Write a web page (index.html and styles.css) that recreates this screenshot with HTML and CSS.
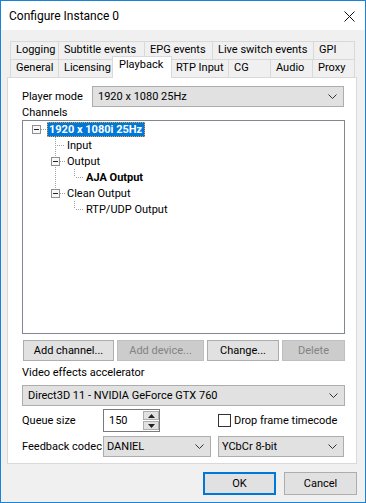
FILE: index.html
```html
<!DOCTYPE html>
<html lang="en">
<head>
    <meta charset="UTF-8">
    <title>Configure Instance 0</title>
    <link rel="stylesheet" href="styles.css">
</head>
<body>
    <div class="window">
        <div class="titlebar">
            <span class="title">Configure Instance 0</span>
            <svg class="close" width="11" height="11" viewBox="0 0 11 11"><path d="M0.5 0.5 L10.5 10.5 M10.5 0.5 L0.5 10.5" stroke="#111" stroke-width="1" fill="none"/></svg>
        </div>

        <div class="content">
            <div class="tabs">
                <div class="tab-row">
                    <div class="tab" style="width:49px">Logging</div>
                    <div class="tab" style="width:87px">Subtitle events</div>
                    <div class="tab" style="width:69px">EPG events</div>
                    <div class="tab" style="width:102px">Live switch events</div>
                    <div class="tab" style="width:42px">GPI</div>
                </div>
                <div class="tab-row">
                    <div class="tab" style="width:49px">General</div>
                    <div class="tab" style="width:56px">Licensing</div>
                    <div class="tab active" style="width:60px">Playback</div>
                    <div class="tab" style="width:59px">RTP Input</div>
                    <div class="tab" style="width:43px">CG</div>
                    <div class="tab" style="width:43px">Audio</div>
                    <div class="tab" style="width:43px">Proxy</div>
                </div>
            </div>

            <div class="panel">
                <div class="field-row">
                    <span class="label player-label">Player mode</span>
                    <div class="combo player-combo">
                        <span>1920 x 1080 25Hz</span>
                        <svg class="chev" width="9" height="5" viewBox="0 0 9 5"><path d="M0.5 0.5 L4.5 4.5 L8.5 0.5" stroke="#333" fill="none"/></svg>
                    </div>
                </div>

                <div class="caption channels">Channels</div>

                <div class="tree">
                    <div class="tree-row">
                        <svg class="cell" width="19" height="16"><rect x="5.5" y="4.5" width="8" height="8" fill="#f7f7f7" stroke="#8f8f8f"/><path d="M7 8.5 H12" stroke="#222"/><path d="M14 8.5 H19" stroke="#a0a0a0" stroke-dasharray="1 1"/></svg>
                        <span class="node selected">1920 x 1080i 25Hz</span>
                    </div>
                    <div class="tree-row">
                        <span class="indent"></span>
                        <svg class="cell" width="19" height="16"><path d="M9.5 0 V16" stroke="#a0a0a0" stroke-dasharray="1 1"/><path d="M11 8.5 H19" stroke="#a0a0a0" stroke-dasharray="1 1"/></svg>
                        <span class="node">Input</span>
                    </div>
                    <div class="tree-row">
                        <span class="indent"></span>
                        <svg class="cell" width="19" height="16"><path d="M9.5 0 V16" stroke="#a0a0a0" stroke-dasharray="1 1"/><rect x="5.5" y="4.5" width="8" height="8" fill="#f7f7f7" stroke="#8f8f8f"/><path d="M7 8.5 H12" stroke="#222"/><path d="M14 8.5 H19" stroke="#a0a0a0" stroke-dasharray="1 1"/></svg>
                        <span class="node">Output</span>
                    </div>
                    <div class="tree-row">
                        <span class="indent"></span>
                        <svg class="cell" width="19" height="16"><path d="M9.5 0 V16" stroke="#a0a0a0" stroke-dasharray="1 1"/></svg>
                        <svg class="cell" width="19" height="16"><path d="M9.5 0 V8" stroke="#a0a0a0" stroke-dasharray="1 1"/><path d="M11 8.5 H19" stroke="#a0a0a0" stroke-dasharray="1 1"/></svg>
                        <span class="node bold">AJA Output</span>
                    </div>
                    <div class="tree-row">
                        <span class="indent"></span>
                        <svg class="cell" width="19" height="16"><path d="M9.5 0 V8" stroke="#a0a0a0" stroke-dasharray="1 1"/><rect x="5.5" y="4.5" width="8" height="8" fill="#f7f7f7" stroke="#8f8f8f"/><path d="M7 8.5 H12" stroke="#222"/><path d="M14 8.5 H19" stroke="#a0a0a0" stroke-dasharray="1 1"/></svg>
                        <span class="node">Clean Output</span>
                    </div>
                    <div class="tree-row">
                        <span class="indent"></span>
                        <span class="indent"></span>
                        <svg class="cell" width="19" height="16"><path d="M9.5 0 V8" stroke="#a0a0a0" stroke-dasharray="1 1"/><path d="M11 8.5 H19" stroke="#a0a0a0" stroke-dasharray="1 1"/></svg>
                        <span class="node">RTP/UDP Output</span>
                    </div>
                </div>

                <div class="button-row">
                    <div class="btn" style="width:91px">Add channel...</div>
                    <div class="btn disabled" style="width:87px">Add device...</div>
                    <div class="btn" style="width:72px">Change...</div>
                    <div class="btn disabled" style="width:63px">Delete</div>
                </div>

                <div class="caption accel">Video effects accelerator</div>
                <div class="combo wide-combo">
                    <span>Direct3D 11 - NVIDIA GeForce GTX 760</span>
                    <svg class="chev" width="9" height="5" viewBox="0 0 9 5"><path d="M0.5 0.5 L4.5 4.5 L8.5 0.5" stroke="#333" fill="none"/></svg>
                </div>

                <div class="field-row queue-row">
                    <span class="label short-label">Queue size</span>
                    <div class="spinner">
                        <div class="spin-text">150</div>
                        <div class="spin-buttons">
                            <div class="spin-btn"><svg width="7" height="4" viewBox="0 0 7 4"><path d="M3.5 0 L7 4 L0 4 Z" fill="#222"/></svg></div>
                            <div class="spin-btn"><svg width="7" height="4" viewBox="0 0 7 4"><path d="M0 0 L7 0 L3.5 4 Z" fill="#222"/></svg></div>
                        </div>
                    </div>
                    <div class="checkbox"></div>
                    <span class="check-label">Drop frame timecode</span>
                </div>

                <div class="field-row codec-row">
                    <span class="label short-label">Feedback codec</span>
                    <div class="combo codec-combo">
                        <span>DANIEL</span>
                        <svg class="chev" width="9" height="5" viewBox="0 0 9 5"><path d="M0.5 0.5 L4.5 4.5 L8.5 0.5" stroke="#333" fill="none"/></svg>
                    </div>
                    <div class="combo format-combo">
                        <span>YCbCr 8-bit</span>
                        <svg class="chev" width="9" height="5" viewBox="0 0 9 5"><path d="M0.5 0.5 L4.5 4.5 L8.5 0.5" stroke="#333" fill="none"/></svg>
                    </div>
                </div>
            </div>

            <div class="footer">
                <div class="btn dialog-btn default">OK</div>
                <div class="btn dialog-btn">Cancel</div>
            </div>
        </div>
    </div>
</body>
</html>
```

FILE: styles.css
```css
* {
    margin: 0;
    padding: 0;
    box-sizing: border-box;
}

body {
    font-family: Roboto, 'Noto Sans', sans-serif;
    font-size: 11px;
    color: #000;
    background: #fff;
}

.window {
    width: 366px;
    height: 503px;
    border: 1px solid #1883d7;
    background: #f0f0f0;
    display: flex;
    flex-direction: column;
}

.titlebar {
    height: 29px;
    background: #fff;
    display: flex;
    align-items: center;
    justify-content: space-between;
    padding: 0 10px 0 8px;
    font-size: 12px;
}

.title {
    line-height: 16px;
    padding-top: 1px;
}

.close {
    display: block;
    margin-top: 1px;
}

.content {
    padding: 11px 8px 0 6px;
}

/* tab strip */
.tabs {
    padding-left: 3px;
}

.tab-row {
    display: flex;
    height: 18px;
}

.tab {
    height: 18px;
    margin-left: -1px;
    border: 1px solid #d9d9d9;
    border-bottom: none;
    background: #f0f0f0;
    padding-left: 5px;
    line-height: 16px;
    white-space: nowrap;
    overflow: hidden;
}

.tab:first-child {
    margin-left: 0;
}

.tab.active {
    position: relative;
    z-index: 1;
    height: 22px;
    margin-top: -3px;
    margin-left: -2px;
    margin-right: -1px;
    width: 59px;
    background: #fff;
    padding-left: 6px;
}

.panel {
    width: 350px;
    height: 387px;
    border: 1px solid #d9d9d9;
    background: #fff;
    padding: 8px 0 0 14px;
}

.field-row {
    display: flex;
    align-items: center;
}

.label {
    line-height: 14px;
    white-space: nowrap;
}

.player-label {
    width: 70px;
}

.short-label {
    width: 81px;
}

.caption {
    line-height: 14px;
    white-space: nowrap;
}

.channels {
    height: 14px;
    margin-top: -1px;
}

.accel {
    height: 14px;
    margin: 5px 0 5px;
}

/* combo boxes */
.combo {
    height: 21px;
    background: #e1e1e1;
    border: 1px solid #adadad;
    display: flex;
    align-items: center;
    justify-content: space-between;
    padding: 0 6px 0 5px;
    white-space: nowrap;
}

.chev {
    display: block;
}

.player-combo {
    width: 252px;
}

.wide-combo {
    width: 323px;
}

.codec-combo {
    width: 108px;
    padding-left: 3px;
}

.format-combo {
    width: 126px;
    margin-left: 7px;
    padding-left: 3px;
}

/* tree view */
.tree {
    width: 323px;
    height: 214px;
    border: 1px solid #828790;
    padding: 0 0 0 4px;
}

.tree-row {
    display: flex;
    align-items: center;
    height: 16px;
}

.cell {
    display: block;
    flex: none;
}

.indent {
    width: 19px;
    flex: none;
}

.node {
    padding: 0 1px;
    line-height: 13px;
    height: 15px;
    border: 1px solid transparent;
    white-space: nowrap;
}

.node.selected {
    margin-left: 1px;
    padding: 0 2px 0 1px;
    background: #0078d7;
    color: #fff;
    font-weight: bold;
    border: 1px dotted #f0a030;
}

.node.bold {
    font-weight: bold;
}

/* buttons */
.button-row {
    display: flex;
    gap: 3px;
    margin: 6px 0 0 1px;
}

.btn {
    height: 21px;
    background: #e1e1e1;
    border: 1px solid #adadad;
    display: flex;
    align-items: center;
    justify-content: center;
    white-space: nowrap;
}

.btn.disabled {
    background: #cccccc;
    border-color: #bfbfbf;
    color: #838383;
}

/* spinner and checkbox */
.queue-row {
    margin-top: 3px;
    height: 23px;
}

.spinner {
    display: flex;
    width: 57px;
    height: 23px;
    border: 1px solid #7a7a7a;
}

.spin-text {
    width: 39px;
    padding-left: 5px;
    line-height: 21px;
}

.spin-buttons {
    display: flex;
    flex-direction: column;
    gap: 1px;
    width: 16px;
    padding: 1px 0;
}

.spin-btn {
    flex: 1;
    background: #e1e1e1;
    border: 1px solid #adadad;
    display: flex;
    align-items: center;
    justify-content: center;
}

.spin-btn svg {
    display: block;
}

.checkbox {
    width: 13px;
    height: 13px;
    border: 1px solid #333;
    background: #fff;
    margin-left: 58px;
}

.check-label {
    margin-left: 3px;
    white-space: nowrap;
}

.codec-row {
    margin-top: 4px;
}

/* dialog buttons */
.footer {
    display: flex;
    justify-content: flex-end;
    gap: 8px;
    margin-top: 8px;
}

.dialog-btn {
    width: 73px;
    height: 23px;
}

.dialog-btn.default {
    border: 2px solid #0078d7;
}
```
